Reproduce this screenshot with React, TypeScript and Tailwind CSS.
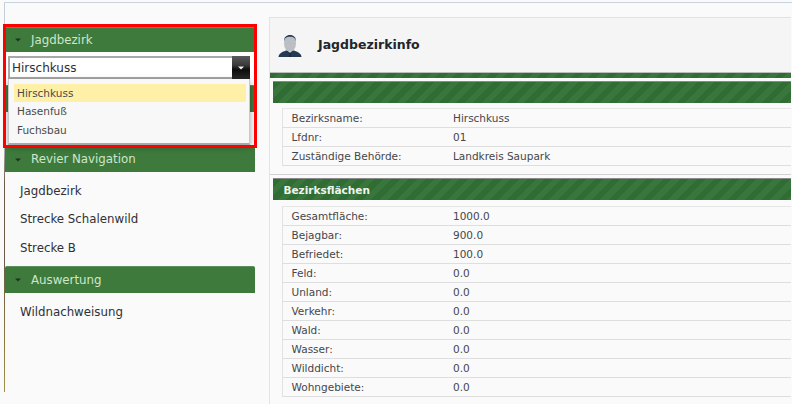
const font = "font-['DejaVu_Sans','Liberation_Sans',sans-serif]";

function Caret() {
  return (
    <svg width="6" height="4" viewBox="0 0 6 4" className="mr-[10px] ml-[10px] shrink-0">
      <path d="M0 0.5 H6 L3 3.5 Z" fill="#1f3320" />
    </svg>
  );
}

function SideHeader({ label, className = "", textClass = "" }: { label: string; className?: string; textClass?: string }) {
  return (
    <div className={`flex items-center bg-[#3e7a3c] text-[#cfe6cd] text-[11.8px] border-t border-t-[#5b8f59] ${className}`}>
      <Caret />
      <span className={textClass}>{label}</span>
    </div>
  );
}

function NavItem({ label }: { label: string }) {
  return <div className="h-[28.5px] flex items-center pl-[15px] pt-[3px] text-[11.8px] text-[#2f3136]">{label}</div>;
}

function Band({ children, className = "" }: { children?: React.ReactNode; className?: string }) {
  return (
    <div
      className={`bg-[#35733a] bg-[repeating-linear-gradient(135deg,#306d35_0px,#306d35_6px,#38763b_6px,#38763b_12px)] ${className}`}
    >
      {children}
    </div>
  );
}

function InfoTable({ rows, className = "" }: { rows: [string, string][]; className?: string }) {
  return (
    <div className={`ml-[12px] border-l border-l-[#e2e2e2] border-t border-t-[#e6e6e6] ${className}`}>
      {rows.map(([k, v]) => (
        <div key={k} className="h-[19px] flex items-center pt-px border-b border-b-[#dedede] text-[10.5px] text-[#45474b]">
          <span className="w-[170px] pl-[8.5px] shrink-0">{k}</span>
          <span>{v}</span>
        </div>
      ))}
    </div>
  );
}

function Person() {
  return (
    <svg width="24" height="24" viewBox="0 0 24 24" className="shrink-0">
      <path d="M0.5 23 C1 19.5 3 18.4 8 16.5 L16 16.5 C21 18.4 23 19.5 23.5 23 Z" fill="#243a52" />
      <path d="M9.5 16.5 L12 19 L14.5 16.5 Z" fill="#dfe3e6" />
      <path d="M11.4 18.6 H12.6 L13 23 H11 Z" fill="#1b2b3d" />
      <ellipse cx="12" cy="9.5" rx="6" ry="8" fill="#b9bfc5" />
      <path d="M6 8 C5.8 3 8.5 1 12 1 C15.5 1 18.2 3 18 8 C17.5 4.5 16 2.8 12 2.8 C8 2.8 6.5 4.5 6 8 Z" fill="#243a52" />
    </svg>
  );
}

export default function App() {
  return (
    <div className={`relative w-[792px] h-[404px] overflow-hidden bg-[#fafafa] pt-[2px] ${font}`}>
      <div className="h-px bg-[#c9d3df] ml-[4px]" />
      <div className="flex h-[401px]">
        <div className="ml-[4px] w-px shrink-0 bg-[linear-gradient(180deg,#c4cdd8_0%,#c4cdd8_34%,#6b5a45_45%,#6b5a45_64%,#8a7a3a_84%,#a08f50_97%,#fafafa_97%)]" />
        <aside className="w-[250px] shrink-0 pt-[24px] relative">
          <SideHeader label="Jagdbezirk" className="h-[25px]" textClass="pt-[2px]" />
          <div className="h-[33px] bg-white" />
          <SideHeader label="" className="h-[27px]" />
          <div className="h-[34px]" />
          <SideHeader label="Revier Navigation" className="h-[26px]" />
          <div className="pt-[4px] h-[94px]">
            <NavItem label="Jagdbezirk" />
            <NavItem label="Strecke Schalenwild" />
            <NavItem label="Strecke B" />
          </div>
          <SideHeader label="Auswertung" className="h-[27px] rounded-t-[2px]" textClass="pt-[2px]" />
          <div className="pt-[4px]">
            <NavItem label="Wildnachweisung" />
          </div>
        </aside>
        <main className="ml-[15px] flex-1 border-l border-l-[#e4e4e4] mt-[14px] border-t border-t-[#e2e2e2] -translate-x-px">
          <div className="h-[55px] bg-[#f5f5f5] flex items-center pl-[8px] pt-[1px] border-b border-b-[#bdbdbd]">
            <Person />
            <span className="ml-[16px] text-[12.5px] font-bold text-[#22252a]">Jagdbezirkinfo</span>
          </div>
          <Band className="h-[5px]" />
          <div className="h-[3px]" />
          <Band className="h-[22px] ml-[3px] border-t border-t-[#8a8a8a]" />
          <InfoTable className="mt-[5px]" rows={[["Bezirksname:", "Hirschkuss"], ["Lfdnr:", "01"], ["Zuständige Behörde:", "Landkreis Saupark"]]} />
          <div className="mt-[8px] h-[4px] border-t border-t-[#d2d2d2]" />
          <Band className="h-[22px] ml-[3px] border-t border-t-[#8a8a8a] flex items-center pl-[10.5px] pt-[2px] text-[10.5px] font-bold text-[#f0f5ee]">
            Bezirksflächen
          </Band>
          <InfoTable
            className="mt-[6px]"
            rows={[
              ["Gesamtfläche:", "1000.0"],
              ["Bejagbar:", "900.0"],
              ["Befriedet:", "100.0"],
              ["Feld:", "0.0"],
              ["Unland:", "0.0"],
              ["Verkehr:", "0.0"],
              ["Wald:", "0.0"],
              ["Wasser:", "0.0"],
              ["Wilddicht:", "0.0"],
              ["Wohngebiete:", "0.0"],
            ]}
          />
        </main>
      </div>

      {/* Open select with its list, over the sidebar */}
      <div className="absolute left-[8px] top-[56px] w-[242px] h-[23px] flex border-2 border-[#a8a8a8] border-r-0 bg-white">
        <span className="flex-1 flex items-center pl-[2px] text-[12px] text-[#2c2e33]">Hirschkuss</span>
        <span className="w-[18px] -my-[2px] flex items-center justify-center bg-[linear-gradient(180deg,#5a5a5a_0%,#3a3a3a_40%,#0c0c0c_60%,#2a2a2a_100%)]">
          <svg width="6" height="4" viewBox="0 0 6 4"><path d="M0 0.5 H6 L3 3.5 Z" fill="#f2f2f2" /></svg>
        </span>
      </div>
      <div className="absolute left-[8px] top-[79px] w-[242px] h-[66px] bg-[#f8f8f8] border-b-2 border-b-[#a8a8a8] border-x border-x-[#c8c8c8] pl-[5px] pr-[3px] pt-[5px] shadow-[0_2px_6px_rgba(0,0,0,0.35)] text-[10.5px] text-[#4b4a48]">
        <div className="h-[18px] flex items-center pl-[3px] pt-px bg-[#fff0a8]">Hirschkuss</div>
        <div className="h-[18.5px] flex items-center pl-[3px] pt-px">Hasenfuß</div>
        <div className="h-[19px] flex items-center pl-[3px] pt-[2px]">Fuchsbau</div>
      </div>

      {/* Red annotation frame */}
      <div className="absolute left-[3px] top-[24px] w-[254px] h-[124px] border-[3px] border-[#ff0000]" />
    </div>
  );
}
